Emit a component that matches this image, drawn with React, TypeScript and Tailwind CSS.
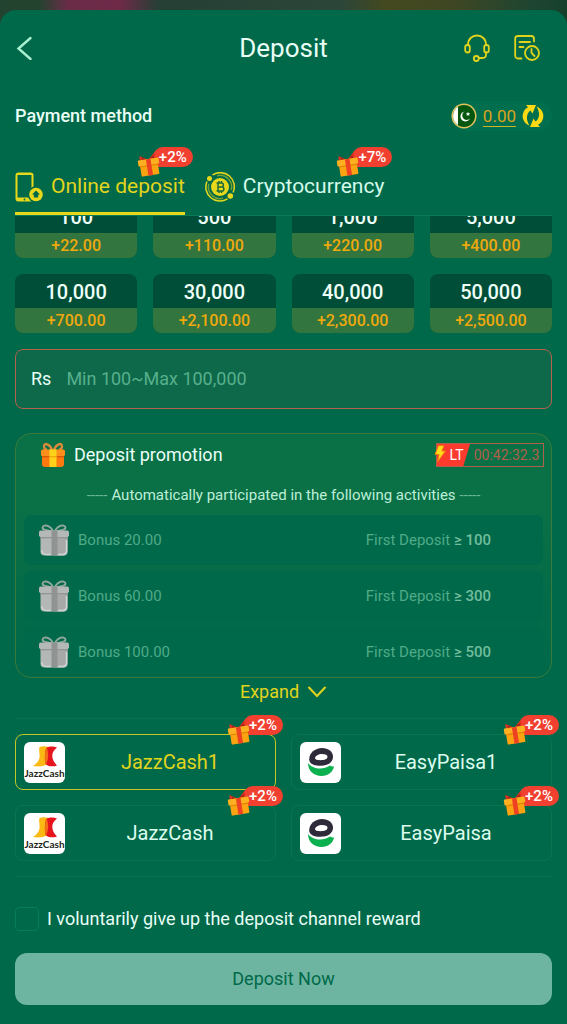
import { useState } from "react";
import clsx from "clsx";

const AMOUNTS = [
  { value: "100", bonus: "+22.00" },
  { value: "500", bonus: "+110.00" },
  { value: "1,000", bonus: "+220.00" },
  { value: "5,000", bonus: "+400.00" },
  { value: "10,000", bonus: "+700.00" },
  { value: "30,000", bonus: "+2,100.00" },
  { value: "40,000", bonus: "+2,300.00" },
  { value: "50,000", bonus: "+2,500.00" },
];

const PROMOTIONS = [
  { bonus: "20.00", min: "100" },
  { bonus: "60.00", min: "300" },
  { bonus: "100.00", min: "500" },
];

const CHANNELS = [
  { name: "JazzCash1", logo: "jazz" },
  { name: "EasyPaisa1", logo: "easy" },
  { name: "JazzCash", logo: "jazz" },
  { name: "EasyPaisa", logo: "easy" },
];

function SmallGift() {
  return (
    <svg width="24" height="25" viewBox="0 0 24 25" className="relative shrink-0" aria-hidden="true">
      <g transform="rotate(-9 12 13)">
        <path d="M11.5 7.500L4 2.500Q3 5 4.500 8zM12.500 7.500L19 1.500Q20.500 4.500 19 8z" fill="#e0301e" />
        <path d="M10.500 7L6 4.500V7zM13.500 7L18 4V7z" fill="#a3241a" />
        <rect x="3" y="11" width="18" height="12.500" rx="1" fill="#fca311" />
        <rect x="1.500" y="7" width="21" height="6" rx="1" fill="#ffb020" />
        <rect x="3" y="13" width="18" height="1.200" fill="#e08408" />
        <rect x="9.800" y="7" width="4.600" height="16.500" fill="#ee4023" />
      </g>
    </svg>
  );
}

function BonusBadge({ label, className }: { label: string; className?: string }) {
  return (
    <span className={clsx("absolute flex items-start", className)}>
      <span className="absolute top-[5px] left-0 z-10">
        <SmallGift />
      </span>
      <span className="ml-4 flex h-5 w-10 items-center justify-center rounded-full rounded-bl-none bg-[#f1402f] text-[15px] leading-5 font-medium text-white">
        {label}
      </span>
    </span>
  );
}

function PromoGift() {
  return (
    <svg width="26" height="26" viewBox="0 0 26 26" aria-hidden="true">
      <path d="M12 8C10 2 4 0 4 4.5C4 6.5 5.5 7.5 7 8M14 8C16 2 22 0 22 4.5C22 6.5 20.5 7.5 19 8" fill="none" stroke="#d98a3d" strokeWidth="2.4" />
      <path d="M2 13h22v9a3 3 0 0 1-3 3H5a3 3 0 0 1-3-3z" fill="#ff7a0e" />
      <rect x="1" y="7.5" width="24" height="6.5" rx="1.5" fill="#ff8f1a" />
      <path d="M2 14h22v1.4H2z" fill="#d85a06" />
      <rect x="9.5" y="7.5" width="7" height="17.5" fill="#ffd21a" />
      <path d="M9.5 14h7v1.4h-7z" fill="#f2a80c" />
    </svg>
  );
}

function GreyGift() {
  return (
    <svg width="32" height="32" viewBox="0 0 32 32" aria-hidden="true">
      <path d="M15 7C12 1 5 0 4.5 3.5C4.2 6 9 6.5 15 7.5M17 7C20 1 27 0 27.5 3.5C27.8 6 23 6.5 17 7.5" fill="none" stroke="#93a99f" strokeWidth="1.8" />
      <path d="M2.5 12h27v15.5a4 4 0 0 1-4 4h-19a4 4 0 0 1-4-4z" fill="#b3b7b5" />
      <path d="M18 12h11.5v15.500a4 4 0 0 1-4 4H18z" fill="#a6a9a8" />
      <path d="M4 26c0 4 2 4.500 5 4.500h4M20 30.500h4c3 0 4.500-1 4.500-4V16" fill="none" stroke="#d3d5d4" strokeWidth="1.4" />
      <rect x="1" y="6.5" width="30" height="6.5" rx="1.8" fill="#b4b8b6" />
      <path d="M2.5 13h27v1.300h-27z" fill="#919694" />
      <rect x="13.5" y="6.5" width="6" height="25" fill="#8f9392" />
    </svg>
  );
}

function JazzCashLogo() {
  return (
    <span className="flex h-[41px] w-[41px] shrink-0 flex-col items-center overflow-hidden rounded-md bg-white pt-1">
      <svg width="26" height="21" viewBox="0 0 26 21" className="shrink-0" aria-hidden="true">
        <path d="M7.500 1C10 0 14 0 17 1.200V16.500C14 20 8 21.200 1 20C4 18 6.800 15.500 7.500 11.500C8 8 6.500 4.500 7.500 1z" fill="#fdb913" />
        <path d="M25 1.500C21.500 4.500 20 7 20.300 10.500C20.600 14 22.500 17 25 19.500C21 21 16.500 20.500 14 18.500C12.300 16 12.500 5 14.500 1.800C17.500 0 22 0.200 25 1.500z" fill="#e5141d" />
        <path d="M14.500 1.800C16.800 6 16.800 13 14 18.500C12.300 16 12.500 5 14.500 1.800z" fill="#f36c16" />
      </svg>
      <span className="font-[Lato,sans-serif] text-[10px] leading-3 font-bold text-[#231f20]">JazzCash</span>
    </span>
  );
}

function EasyPaisaLogo() {
  return (
    <span className="flex h-[41px] w-[41px] shrink-0 items-center justify-center overflow-hidden rounded-md bg-white">
      <svg width="28" height="30" viewBox="0 0 28 30" aria-hidden="true">
        <path d="M15 1C21.5 1 26 4.5 26 9.8C26 15.5 20.5 18.8 13.5 18.8C7 18.8 2.2 16.8 2.2 12.2C2.2 6 8 1 15 1z" fill="#2e2a39" />
        <path d="M15 7C18.500 7 20.500 8 20.500 9.800C20.500 12.200 17.500 13.200 13.500 13.200C10 13.200 8 12.500 8 11.200C8 9 11.500 7 15 7z" fill="#fff" />
        <path d="M1 16C5 22 16 23.500 23 18.500C24.500 19.500 26 19.500 27 19.500C26 25 21 29 14.500 29C7 29 1 24 1 16z" fill="#0bb04f" />
      </svg>
    </span>
  );
}

function SupportIcon() {
  return (
    <svg width="26" height="28" viewBox="0 0 26 28" fill="none" stroke="#e2d41c" strokeWidth="1.8" strokeLinecap="round" aria-hidden="true">
      <path d="M4 11C4 5 8 1.5 13 1.5S22 5 22 11" />
      <rect x="1.2" y="11" width="4.6" height="7.5" rx="2.3" />
      <rect x="20.2" y="11" width="4.6" height="7.5" rx="2.3" />
      <path d="M22 18.500V20.500C22 22.500 20.500 24 18.500 24H14.800" />
      <circle cx="12.3" cy="24.500" r="2.5" />
    </svg>
  );
}

function RecordIcon() {
  return (
    <svg width="26" height="26" viewBox="0 0 26 26" fill="none" stroke="#e2d41c" strokeWidth="1.8" strokeLinecap="round" aria-hidden="true">
      <path d="M7.500 23.500H4A2.800 2.800 0 0 1 1.200 20.700V3.800A2.800 2.800 0 0 1 4 1H17.200A2.800 2.800 0 0 1 20 3.800V6.500" />
      <path d="M5.500 7H16M5.500 12H9.500" />
      <circle cx="18" cy="18" r="7" />
      <path d="M17.500 14V18L20.500 21" />
    </svg>
  );
}

function RefreshIcon() {
  return (
    <svg width="22" height="24" viewBox="0 0 22 24" fill="#fbd914" aria-hidden="true">
      <path d="M7.500 21.500C1 19 -1 12 2 7C3 5.200 4.500 4 6 3.200L4 1L14 1L10.500 9.500L8.500 6.500C4.500 9 3.500 15.500 7.500 21.500z" />
      <path d="M14.500 2.500C21 5 23 12 20 17C19 18.800 17.500 20 16 20.800L18 23L8 23L11.500 14.500L13.500 17.500C17.500 15 18.500 8.500 14.500 2.500z" />
    </svg>
  );
}

function FlagIcon() {
  return (
    <svg width="26" height="26" viewBox="0 0 26 26" aria-hidden="true">
      <circle cx="13" cy="13" r="12.5" fill="#e5c35c" />
      <circle cx="13" cy="13" r="11" fill="#05570f" />
      <path d="M7 3.800V22.200A11 11 0 0 1 7 3.800z" fill="#fff" />
      <path d="M13.500 8.500A5 5 0 1 0 19 15.500A4.500 4.500 0 1 1 13.500 8.500z" fill="#fff" />
      <path d="M17 8.800l.6 1.500 1.600.1-1.200 1 .4 1.600-1.400-.9-1.400.9.400-1.600-1.200-1 1.600-.1z" fill="#fff" />
    </svg>
  );
}

function PhoneIcon() {
  return (
    <svg width="28" height="30" viewBox="0 0 28 30" aria-hidden="true">
      <rect x="0.500" y="0.500" width="18" height="29" rx="3" fill="#e8d81b" />
      <rect x="2.500" y="3" width="14" height="22.500" fill="#00694a" />
      <circle cx="9.500" cy="27.500" r="0.900" fill="#00694a" />
      <circle cx="21" cy="22.500" r="8.300" fill="#00694a" />
      <circle cx="21" cy="22.500" r="6.800" fill="#e8d81b" />
      <path d="M21 18.500l4 4h-1.800v3h-4.400v-3H17z" fill="#00694a" />
    </svg>
  );
}

function CryptoIcon() {
  return (
    <svg width="30" height="30" viewBox="0 0 30 30" fill="none" stroke="#e8d81b" strokeWidth="1.5" aria-hidden="true">
      <path d="M7.500 3A14 14 0 0 1 28 20.500M22.500 26.800A14 14 0 0 1 2 9.500" />
      <path d="M12 3.800A11.600 11.600 0 0 1 26.200 18M18 26.200A11.600 11.600 0 0 1 3.800 12" strokeOpacity=".5" />
      <circle cx="15" cy="15" r="9" fill="#e8d81b" stroke="none" />
      <circle cx="4.5" cy="6.5" r="2.5" fill="#e8d81b" stroke="none" />
      <circle cx="25.3" cy="24" r="2.8" fill="#e8d81b" stroke="none" />
      <path d="M11.500 11H16.500C19 11 19 14.900 16.500 14.900H13H17C19.500 14.900 19.500 19 17 19H11.500M13 11V19M14 9V11M16.500 9V11M14 19V21M16.500 19V21" stroke="#1b6b3c" strokeWidth="1.5" />
    </svg>
  );
}

export default function App() {
  const [tab, setTab] = useState("online");
  const [channel, setChannel] = useState("JazzCash1");
  const [amount, setAmount] = useState("");
  const [giveUp, setGiveUp] = useState(false);

  return (
    <div className="min-h-screen bg-[linear-gradient(90deg,#22432f_0,#24432f_7%,#6a2c48_12%,#6f2a48_21%,#263f35_28%,#2b4639_60%,#44491f_68%,#3f4623_80%,#1d4531_94%,#17402c_100%)] pt-[10px] font-[Roboto,sans-serif] text-white">
      <main className="min-h-[calc(100vh-10px)] rounded-t-2xl bg-[#00694a] px-[15px] pb-[18px]">
        <header className="grid h-[76px] grid-cols-[1fr_auto_1fr] items-center">
          <button aria-label="Back" className="w-fit">
            <svg width="20" height="24" viewBox="0 0 20 24" fill="none" stroke="#a9f0d0" strokeWidth="2.4" strokeLinecap="round" aria-hidden="true">
              <path d="M15.500 2L3.500 12.500L15.500 23" />
            </svg>
          </button>
          <h1 className="text-[26px] font-normal text-[#e9fff6]">Deposit</h1>
          <div className="flex items-center justify-end gap-6 pr-3">
            <button aria-label="Customer service"><SupportIcon /></button>
            <button aria-label="Deposit records"><RecordIcon /></button>
          </div>
        </header>

        <div className="flex h-[60px] items-center justify-between">
          <h2 className="text-lg font-medium text-[#e9fff6]">Payment method</h2>
          <div className="flex h-[30px] items-center gap-1.5 rounded-full bg-[#016f4d] pr-2">
            <FlagIcon />
            <a href="#balance" className="border-b border-[#c9b52a] text-[17px] leading-5 text-[#dda21b]">0.00</a>
            <button aria-label="Refresh balance"><RefreshIcon /></button>
          </div>
        </div>

        <div className="flex h-[70px] items-end gap-5 border-b border-[#0a7a56]" role="tablist">
          <button
            role="tab"
            aria-selected={tab === "online"}
            onClick={() => setTab("online")}
            className={clsx("relative flex h-[54px] items-center gap-2 border-b-[3px] text-[21px]", tab === "online" ? "border-[#e8d81b] text-[#e2d41c]" : "border-transparent")}
          >
            <PhoneIcon />
            Online deposit
            <BonusBadge label="+2%" className="-top-3.5 -right-2" />
          </button>
          <button
            role="tab"
            aria-selected={tab === "crypto"}
            onClick={() => setTab("crypto")}
            className={clsx("relative flex h-[54px] items-center gap-2 border-b-[3px] text-[21px]", tab === "crypto" ? "border-[#e8d81b] text-[#e2d41c]" : "border-transparent text-[#d5fbea]")}
          >
            <CryptoIcon />
            Cryptocurrency
            <BonusBadge label="+7%" className="-top-3.5 -right-2" />
          </button>
        </div>

        <div className="overflow-hidden">
          <div className="-mt-[17px] grid grid-cols-4 gap-4">
            {AMOUNTS.map((item) => (
              <button
                key={item.value}
                onClick={() => setAmount(item.value.replace(",", ""))}
                className="overflow-hidden rounded-lg bg-[#004e37] font-medium"
              >
                <span className="block h-[34px] text-xl leading-9 text-[#eefff8]">{item.value}</span>
                <span className="block h-[25px] bg-[#33753f] text-base leading-[25px] text-[#efa90c]">{item.bonus}</span>
              </button>
            ))}
          </div>
        </div>

        <div className="mt-4 flex h-[60px] items-center rounded-lg border border-[#b5614d] bg-[#0e694a] px-[15px] text-lg">
          <label htmlFor="amount" className="text-[#e9fff6]">Rs</label>
          <input
            id="amount"
            value={amount}
            onChange={(e) => setAmount(e.target.value)}
            placeholder="Min 100~Max 100,000"
            className="ml-[15px] min-w-0 flex-1 bg-transparent outline-none placeholder:text-[#57b08d]"
          />
        </div>

        <section className="mt-6 rounded-2xl border border-[#3a7a3a] bg-[linear-gradient(180deg,#0a7046_0,#0a7046_30%,#036b48_70%,#00694a_100%)] px-2">
          <div className="flex h-[42px] items-center pl-4">
            <PromoGift />
            <h3 className="ml-2 text-lg text-[#e9fff6]">Deposit promotion</h3>
            <div className="relative -mr-px ml-auto flex h-6 w-[108px] items-center border border-[#b0604a] text-sm">
              <span className="flex h-full w-[33px] items-center justify-center bg-[#fc3a2d] pl-1.5 text-white [clip-path:polygon(0_0,100%_0,80%_100%,0_100%)]">LT</span>
              <span className="flex-1 text-center text-[#b0604a]">00:42:32.3</span>
              <svg width="14" height="20" viewBox="0 0 14 20" className="absolute top-0 -left-1" aria-hidden="true">
                <path d="M5.500 1.500H11L9 7H12.500L4.500 18L6 10.500H2z" fill="#ffd91c" stroke="#f0760f" strokeWidth="1" />
              </svg>
            </div>
          </div>
          <p className="flex h-[39px] items-center justify-center text-[15px] text-[#bdeed8]">
            <span className="text-[#6cb898]">-----</span>
            <span className="mx-1">Automatically participated in the following activities</span>
            <span className="text-[#6cb898]">-----</span>
          </p>
          <ul className="flex flex-col gap-1.5">
            {PROMOTIONS.map((promo) => (
              <li key={promo.bonus} className="flex h-[50px] items-center rounded-lg bg-[#00694a] pr-[52px] pl-[14px] text-[15px] text-[#4fab88]">
                <GreyGift />
                <span className="ml-2">Bonus {promo.bonus}</span>
                <span className="ml-auto">
                  First Deposit <b className="font-medium text-[#72bd9c]">≥ {promo.min}</b>
                </span>
              </li>
            ))}
          </ul>
        </section>

        <button className="mx-auto flex h-7 items-center gap-2 text-lg text-[#e2d41c]">
          Expand
          <svg width="20" height="12" viewBox="0 0 20 12" fill="none" stroke="#e2d41c" strokeWidth="2" strokeLinecap="round" aria-hidden="true">
            <path d="M2 1.500L10 10L18 1.500" />
          </svg>
        </button>

        <div className="mt-3 grid grid-cols-2 gap-[15px] border-y border-[#07724f] py-[15px]">
          {CHANNELS.map((item) => (
            <button
              key={item.name}
              onClick={() => setChannel(item.name)}
              className={clsx("relative flex h-14 items-center rounded-lg border px-2 text-xl", channel === item.name ? "border-[#c3c726] text-[#e2d41c]" : "border-[#07764f] text-[#dcfcee]")}
            >
              {item.logo === "jazz" ? <JazzCashLogo /> : <EasyPaisaLogo />}
              <span className="flex-1 pl-2 text-center">{item.name}</span>
              <BonusBadge label="+2%" className="-top-5 -right-2" />
            </button>
          ))}
        </div>

        <label className="mt-[30px] flex h-6 items-center gap-2 text-lg text-[#e9fff6]">
          <input
            type="checkbox"
            checked={giveUp}
            onChange={(e) => setGiveUp(e.target.checked)}
            className="h-6 w-6 appearance-none rounded border border-[#067c57] checked:bg-[#e2d41c]"
          />
          I voluntarily give up the deposit channel reward
        </label>

        <button className="mt-[22px] h-[52px] w-full rounded-xl bg-[#6db5a0] text-lg text-[#00694a]">Deposit Now</button>
      </main>
    </div>
  );
}
